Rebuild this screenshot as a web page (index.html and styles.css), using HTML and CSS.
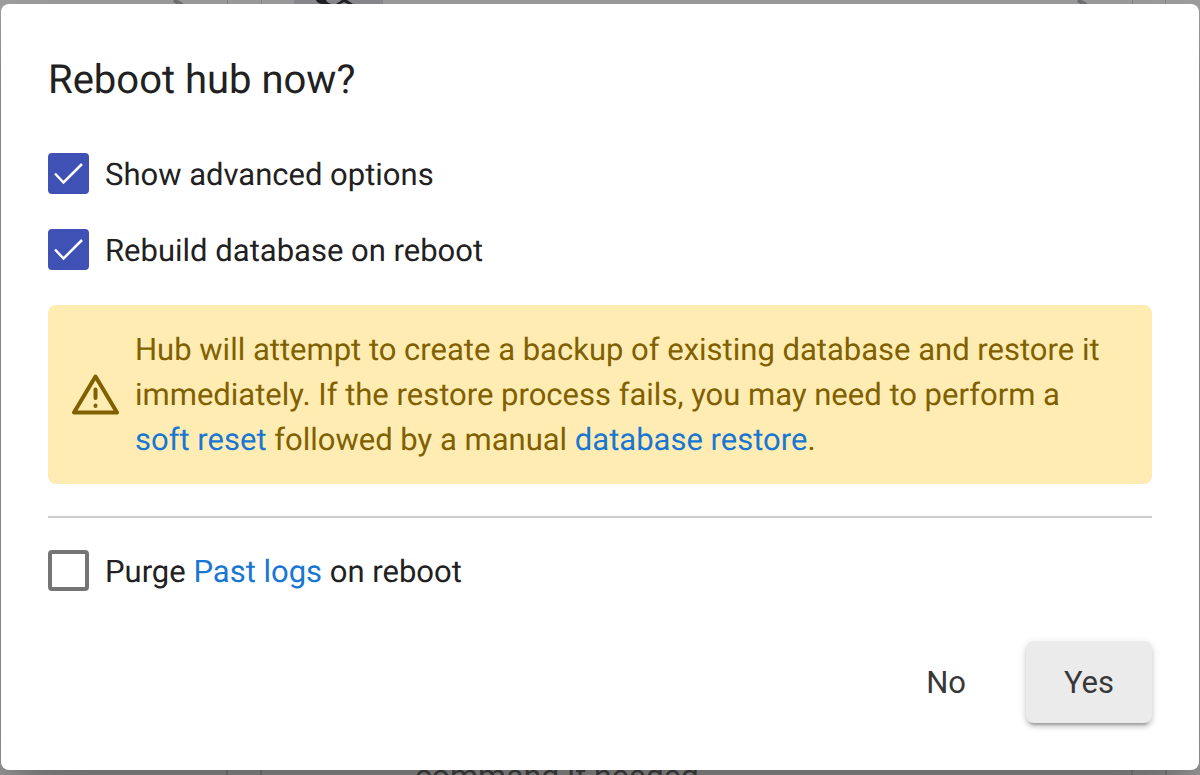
FILE: index.html
```
<!DOCTYPE html>
<html lang="en">
<head>
    <meta charset="UTF-8">
    <meta name="viewport" content="width=device-width, initial-scale=1.0">
    <link rel="stylesheet" href="styles.css">
    <title>Reboot hub</title>
</head>
<body>

    <!-- page behind the dialog -->
    <div class="backdrop" aria-hidden="true">
        <svg class="page-top" width="1200" height="4" viewBox="0 0 1200 4">
            <path d="M294 0H383V4H294z" fill="#919196"/>
            <path d="M174 0l8 5M1078 0l8 5" stroke="#77777b" stroke-width="4"/>
            <path d="M227.500 0V4M261.500 0V4M1132.500 0V4M1165.500 0V4" stroke="#8d8d93"/>
            <path d="M316 0h10q1 3 6 4h-10q-5-1-6-4zM336 4l6-4h5l6 4h-5l-4-2-4 2z" fill="#222226"/>
        </svg>
        <span class="page-line page-line-left"></span>
        <span class="page-line page-line-right"></span>
        <p class="page-text">command if needed</p>
    </div>

    <form class="dialog" role="dialog" aria-labelledby="title">
        <h2 class="title" id="title">Reboot hub now?</h2>

        <div class="option">
            <span class="checkbox">
                <input type="checkbox" id="advanced" checked>
                <svg viewBox="0 0 41 41"><path d="M7 20.500L15.500 29.500L34 11"/></svg>
            </span>
            <label for="advanced">Show advanced options</label>
        </div>

        <div class="option">
            <span class="checkbox">
                <input type="checkbox" id="rebuild" checked>
                <svg viewBox="0 0 41 41"><path d="M7 20.500L15.500 29.500L34 11"/></svg>
            </span>
            <label for="rebuild">Rebuild database on reboot</label>
        </div>

        <div class="warning">
            <svg class="warning-icon" viewBox="0 0 48 42">
                <path class="triangle" d="M23.500 2.500L45 38.500H2z"/>
                <path class="mark" d="M23.500 15.500V24M23.500 31.500V32"/>
            </svg>
            <p>Hub will attempt to create a backup of existing database and restore it immediately. If the restore process fails, you may need to perform a <a href="#">soft reset</a> followed by a manual <a href="#">database restore</a>.</p>
        </div>

        <hr class="divider">

        <div class="option">
            <span class="checkbox">
                <input type="checkbox" id="purge">
                <svg viewBox="0 0 41 41"><path d="M7 20.500L15.500 29.500L34 11"/></svg>
            </span>
            <label for="purge">Purge <a href="#">Past logs</a> on reboot</label>
        </div>

        <div class="actions">
            <button type="button" class="button">No</button>
            <button type="button" class="button button-raised">Yes</button>
        </div>
    </form>

</body>
</html>
```
FILE: styles.css
```
* {
    box-sizing: border-box;
}

body {
    margin: 0;
    padding: 4px 1px 5px;
    background-color: #a4a4a4;
    color: #212121;
    font-family: Roboto, sans-serif;
    font-size: 31px;
    line-height: 45px;
    text-rendering: geometricPrecision;
    overflow: hidden;
}

a {
    color: #1976d2;
    text-decoration: none;
    white-space: nowrap;
}

/* Page behind the dialog */
.backdrop {
    position: absolute;
    inset: 0;
    overflow: hidden;
}

.page-top {
    position: absolute;
    top: 0;
    left: 0;
}

.page-line {
    position: absolute;
    bottom: 0;
    width: 36px;
    height: 8px;
    border: solid #8f8f93;
    border-width: 0 2px;
}

.page-line-left {
    left: 226px;
}

.page-line-right {
    left: 1131px;
}

.page-text {
    position: absolute;
    bottom: -24px;
    left: 415px;
    margin: 0;
    color: #4b4b4b;
    font-size: 32px;
}

/* Dialog */
.dialog {
    position: relative;
    padding: 43px 47px 47px;
    border-radius: 8px;
    background-color: #ffffff;
    box-shadow: 0 22px 30px -14px rgba(0, 0, 0, 0.2), 0 48px 76px 6px rgba(0, 0, 0, 0.14), 0 18px 92px 16px rgba(0, 0, 0, 0.12);
}

.title {
    margin: 0 0 40px;
    font-size: 40px;
    font-weight: 400;
    line-height: 66px;
}

.option {
    display: flex;
    align-items: center;
    gap: 16px;
    height: 41px;
    margin-bottom: 35px;
}

.checkbox {
    display: grid;
    width: 41px;
    height: 41px;
}

.checkbox input,
.checkbox svg {
    grid-area: 1 / 1;
    width: 41px;
    height: 41px;
    margin: 0;
}

.checkbox input {
    appearance: none;
    border: 4px solid #757575;
    border-radius: 4px;
}

.checkbox input:checked {
    border-color: #3f51b5;
    background-color: #3f51b5;
}

.checkbox svg {
    fill: none;
    stroke: #ffffff;
    stroke-width: 2.5;
    pointer-events: none;
}

.checkbox input:not(:checked) + svg {
    visibility: hidden;
}

.option label {
    padding-top: 2px;
}

.warning {
    display: flex;
    align-items: center;
    gap: 15px;
    padding: 22px 24px;
    border-radius: 8px;
    background-color: #ffecb3;
    color: #806000;
}

.warning p {
    margin: 0;
}

.warning-icon {
    flex: none;
    width: 48px;
    height: 42px;
    fill: none;
    stroke: #806000;
    stroke-width: 4;
    stroke-linecap: round;
    stroke-linejoin: round;
}

.divider {
    height: 2px;
    margin: 32px 0;
    border: none;
    background-color: #cccccc;
}

.actions {
    display: flex;
    justify-content: flex-end;
    gap: 22px;
    margin-top: 50px;
}

.button {
    height: 82px;
    padding: 0 38px;
    border: none;
    border-radius: 8px;
    background: none;
    color: #383838;
    font: inherit;
    cursor: pointer;
}

.button-raised {
    background-color: #ebebeb;
    box-shadow: 0 6px 2px -4px rgba(0, 0, 0, 0.2), 0 4px 4px 0 rgba(0, 0, 0, 0.14), 0 2px 10px 0 rgba(0, 0, 0, 0.12);
}
```
